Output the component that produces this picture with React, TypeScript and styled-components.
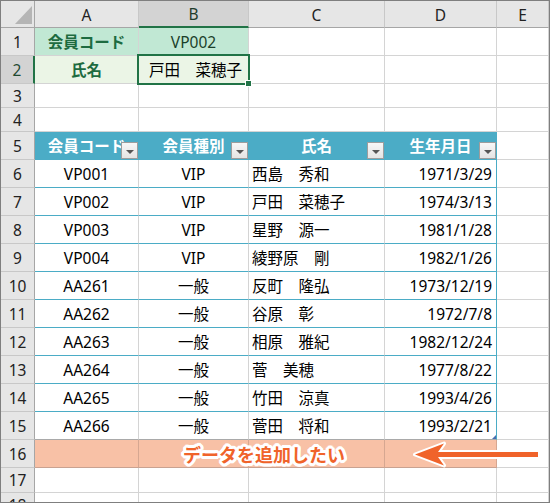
import React from "react";
import styled, { createGlobalStyle, css } from "styled-components";

const Global = createGlobalStyle`
  html, body { margin: 0; padding: 0; background: #fff; }
  body { font-family: "Noto Sans", "Noto Sans CJK JP", sans-serif; }
`;

const FONT = `"Noto Sans", "Noto Sans CJK JP", sans-serif`;
const GRID = "#d4d4d4";
const BLUE = "#4bacc6";
const GREEN = "#217346";

const Sheet = styled.div`
  position: relative;
  width: 550px;
  height: 503px;
  box-sizing: border-box;
  border: 1px solid #7f7f7f;
  overflow: hidden;
  display: grid;
  grid-template-columns: 34px 104px 110px 136px 112px 1fr;
  grid-template-rows: 27px 28px 28px 24px 24px repeat(12, 28px) 25px 1fr;
  font-family: ${FONT};
  font-size: 15.5px;
  color: #000;
`;

const base = css`
  box-sizing: border-box;
  border-right: 1px solid ${GRID};
  border-bottom: 1px solid ${GRID};
  display: flex;
  align-items: center;
  white-space: nowrap;
  position: relative;
  min-width: 0;
`;

const Corner = styled.div`
  ${base};
  background: #e6e6e6;
  border-right-color: #a6a6a6;
  border-bottom-color: #a6a6a6;
  &::after {
    content: "";
    position: absolute;
    right: 2px;
    bottom: 3px;
    width: 0;
    height: 0;
    border-left: 17px solid transparent;
    border-bottom: 18px solid #b5b5b5;
  }
`;

const ColHead = styled.div<{ $sel?: boolean }>`
  ${base};
  justify-content: center;
  background: ${(p) => (p.$sel ? "#d3d3d3" : "#e6e6e6")};
  border-right-color: #c8c8c8;
  border-bottom: ${(p) => (p.$sel ? `2px solid ${GREEN}` : "1px solid #a6a6a6")};
  color: ${(p) => (p.$sel ? "#1f3d2c" : "#222")};
  font-size: 15.5px;
  padding-top: 1px;
`;

const RowHead = styled.div<{ $sel?: boolean; $cut?: boolean }>`
  ${base};
  justify-content: center;
  align-items: ${(p) => (p.$cut ? "flex-start" : "center")};
  padding-top: ${(p) => (p.$cut ? "1px" : "0")};
  background: ${(p) => (p.$sel ? "#d3d3d3" : "#e6e6e6")};
  border-right: ${(p) => (p.$sel ? `2px solid ${GREEN}` : "1px solid #a6a6a6")};
  border-bottom-color: #c8c8c8;
  color: ${(p) => (p.$sel ? "#1f4a32" : "#222")};
  font-size: 15.5px;
`;

type Align = "left" | "center" | "right";
const justify = (a?: Align) =>
  a === "left" ? "flex-start" : a === "right" ? "flex-end" : "center";

const Cell = styled.div<{ $bg?: string; $align?: Align; $pad?: number }>`
  ${base};
  background: ${(p) => p.$bg || "#fff"};
  justify-content: ${(p) => justify(p.$align)};
  padding: 0 ${(p) => p.$pad ?? 3}px;
`;

const KeyCell = styled(Cell)<{ $bold?: boolean; $ink?: string }>`
  font-weight: ${(p) => (p.$bold ? 700 : 400)};
  color: ${(p) => p.$ink || "#1d6b40"};
`;

const Selected = styled(Cell)`
  &::after {
    content: "";
    position: absolute;
    left: -2px;
    top: -2px;
    right: -2px;
    bottom: -2px;
    border: 2px solid ${GREEN};
    pointer-events: none;
    z-index: 2;
  }
  &::before {
    content: "";
    position: absolute;
    right: -4px;
    bottom: -4px;
    width: 5px;
    height: 5px;
    background: ${GREEN};
    border: 1px solid #fff;
    z-index: 3;
  }
`;

const TableHead = styled.div`
  ${base};
  justify-content: center;
  background: ${BLUE};
  border-right-color: ${BLUE};
  border-bottom-color: ${BLUE};
  color: #fff;
  font-weight: 700;
  padding-bottom: 1px;
`;

const FilterButton = styled.span`
  position: absolute;
  right: 0;
  bottom: 0;
  width: 17px;
  height: 17px;
  box-sizing: border-box;
  background: linear-gradient(#f7f7f7, #e4e4e4);
  border: 1px solid #9d9d9d;
  &::after {
    content: "";
    position: absolute;
    left: 4px;
    top: 7px;
    border-left: 4px solid transparent;
    border-right: 4px solid transparent;
    border-top: 4px solid #555;
  }
`;

const TableCell = styled(Cell)<{ $lastCol?: boolean; $lastRow?: boolean }>`
  border-bottom-color: ${(p) => (p.$lastRow ? "#a9a9a9" : BLUE)};
  border-right-color: ${(p) => (p.$lastCol ? BLUE : GRID)};
`;

const ResizeMark = styled.span`
  position: absolute;
  right: 0;
  bottom: 0;
  border-left: 4px solid transparent;
  border-bottom: 4px solid #4a6fb0;
`;

const HighlightCell = styled(Cell)`
  background: #f8c1a6;
  border-right-color: #d6a791;
  border-bottom-color: #c9a291;
`;

const Annotation = styled.div`
  position: absolute;
  left: 182px;
  top: 440px;
  font-family: "Noto Sans CJK JP", sans-serif;
  font-weight: 700;
  font-size: 18px;
  line-height: 26px;
  color: #f0632a;
  white-space: nowrap;
  text-shadow:
    2px 0 0 #fff, -2px 0 0 #fff, 0 2px 0 #fff, 0 -2px 0 #fff,
    2px 2px 0 #fff, -2px -2px 0 #fff, 2px -2px 0 #fff, -2px 2px 0 #fff,
    3px 0 0 #fff, -3px 0 0 #fff, 0 3px 0 #fff, 0 -3px 0 #fff,
    1px 3px 0 #fff, -1px 3px 0 #fff, 1px -3px 0 #fff, -1px -3px 0 #fff,
    3px 1px 0 #fff, 3px -1px 0 #fff, -3px 1px 0 #fff, -3px -1px 0 #fff;
  z-index: 4;
`;

const Arrow = styled.svg`
  position: absolute;
  left: 405px;
  top: 438px;
  z-index: 4;
`;

const rows: [string, string, string, string][] = [
  ["VP001", "VIP", "西島　秀和", "1971/3/29"],
  ["VP002", "VIP", "戸田　菜穂子", "1974/3/13"],
  ["VP003", "VIP", "星野　源一", "1981/1/28"],
  ["VP004", "VIP", "綾野原　剛", "1982/1/26"],
  ["AA261", "一般", "反町　隆弘", "1973/12/19"],
  ["AA262", "一般", "谷原　彰", "1972/7/8"],
  ["AA263", "一般", "相原　雅紀", "1982/12/24"],
  ["AA264", "一般", "菅　美穂", "1977/8/22"],
  ["AA265", "一般", "竹田　涼真", "1993/4/26"],
  ["AA266", "一般", "菅田　将和", "1993/2/21"],
];

const cols = ["A", "B", "C", "D", "E"];

export default function App() {
  return (
    <>
      <Global />
      <Sheet>
        <Corner />
        {cols.map((c) => (
          <ColHead key={c} $sel={c === "B"}>
            {c}
          </ColHead>
        ))}

        <RowHead>1</RowHead>
        <KeyCell $bg="#c1e8d4" $bold>会員コード</KeyCell>
        <KeyCell $bg="#c1e8d4" $ink="#1b3f2a">VP002</KeyCell>
        <Cell />
        <Cell />
        <Cell />

        <RowHead $sel>2</RowHead>
        <KeyCell $bg="#ebf5e6" $bold>氏名</KeyCell>
        <Selected $bg="#ebf5e6" $align="left" $pad={10}>戸田　菜穂子</Selected>
        <Cell />
        <Cell />
        <Cell />

        <RowHead>3</RowHead>
        <Cell /><Cell /><Cell /><Cell /><Cell />
        <RowHead>4</RowHead>
        <Cell /><Cell /><Cell /><Cell /><Cell />

        <RowHead>5</RowHead>
        {["会員コード", "会員種別", "氏名", "生年月日"].map((h) => (
          <TableHead key={h}>
            {h}
            <FilterButton />
          </TableHead>
        ))}
        <Cell />

        {rows.map((r, i) => {
          const last = i === rows.length - 1;
          return (
            <React.Fragment key={r[0]}>
              <RowHead>{i + 6}</RowHead>
              <TableCell $lastRow={last}>{r[0]}</TableCell>
              <TableCell $lastRow={last}>{r[1]}</TableCell>
              <TableCell $lastRow={last} $align="left">{r[2]}</TableCell>
              <TableCell $lastRow={last} $lastCol $align="right" $pad={4}>
                {r[3]}
                {last && <ResizeMark />}
              </TableCell>
              <Cell />
            </React.Fragment>
          );
        })}

        <RowHead>16</RowHead>
        <HighlightCell />
        <HighlightCell />
        <HighlightCell />
        <HighlightCell />
        <Cell />

        <RowHead>17</RowHead>
        <Cell /><Cell /><Cell /><Cell /><Cell />
        <RowHead $cut>18</RowHead>
        <Cell /><Cell /><Cell /><Cell /><Cell />

        <Annotation>データを追加したい</Annotation>
        <Arrow width="140" height="32" viewBox="0 0 140 32">
          <path
            d="M9 15.5 L38 4.5 L32 13 L132 13 L132 18 L32 18 L38 26.5 Z"
            fill="#f0632a"
            stroke="#fff"
            strokeWidth="4"
            strokeLinejoin="round"
            paintOrder="stroke"
          />
        </Arrow>
      </Sheet>
    </>
  );
}
